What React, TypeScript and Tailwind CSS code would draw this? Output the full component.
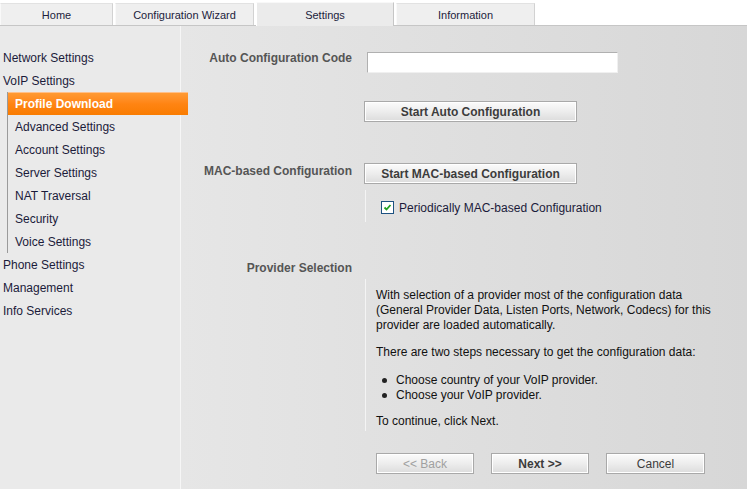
import React from 'react';

const tabs = [
  { label: 'Home', w: 'w-[113px]' },
  { label: 'Configuration Wizard', w: 'w-[139px]' },
  { label: 'Settings', w: 'w-[138px]', active: true },
  { label: 'Information', w: 'w-[139px]' },
];

const voipItems = [
  'Profile Download',
  'Advanced Settings',
  'Account Settings',
  'Server Settings',
  'NAT Traversal',
  'Security',
  'Voice Settings',
];

const Btn: React.FC<{ children: React.ReactNode; className?: string; disabled?: boolean }> = ({ children, className = '', disabled }) => (
  <button
    className={`h-[21px] border border-[#a9a9a9] bg-gradient-to-b from-[#fbfbfb] via-[#ededed] to-[#dcdcdc] text-[12px] shadow-[inset_0_0_0_1px_#ffffff] ${disabled ? 'text-[#a0a0a0]' : 'text-[#3c3c3c]'} ${className}`}
  >
    {children}
  </button>
);

export default function App() {
  return (
    <div className="w-[747px] h-[489px] overflow-hidden bg-white text-[12px] text-[#1b1b3a]" style={{ fontFamily: '"Liberation Sans", Arial, sans-serif' }}>
      {/* Tabs */}
      <div className="flex items-end h-[26px] bg-white border-b border-[#c6c6c6] gap-[2px]">
        {tabs.map((t) => (
          <div
            key={t.label}
            className={`${t.w} flex items-center justify-center pt-[2px] text-[11px] text-[#1c1c3c] border-t border-l border-r ${
              t.active
                ? 'h-[24px] -mb-px bg-[#ebebeb] border-t-[#f8f8f8] border-l-[#ffffff] border-r-[#c6c6c6]'
                : 'h-[22px] bg-[#efefef] border-t-[#e2e2e2] border-l-[#f9f9f9] border-r-[#d2d2d2]'
            }`}
          >
            {t.label}
          </div>
        ))}
      </div>

      <div className="flex h-[463px]">
        {/* Sidebar */}
        <div className="relative z-10 w-[181px] shrink-0 bg-[#eaeaea] border-r border-[#f6f6f6] pt-[20px]">
          <div className="h-[23px] flex items-center pl-[3px]">Network Settings</div>
          <div className="h-[23px] flex items-center pl-[3px]">VoIP Settings</div>
          <div className="ml-[7px] border-l border-[#9a9a9a]">
            {voipItems.map((it, i) =>
              i === 0 ? (
                <div
                  key={it}
                  className="w-[180px] h-[23px] flex items-center pl-[7px] bg-gradient-to-b from-[#ff9a33] via-[#ff8412] to-[#f97c00] border-t border-[#ffc08a] text-white font-bold"
                >
                  {it}
                </div>
              ) : (
                <div key={it} className="h-[23px] flex items-center pl-[7px]">
                  {it}
                </div>
              )
            )}
          </div>
          <div className="h-[23px] flex items-center pl-[3px]">Phone Settings</div>
          <div className="h-[23px] flex items-center pl-[3px]">Management</div>
          <div className="h-[23px] flex items-center pl-[3px]">Info Services</div>
        </div>

        {/* Main */}
        <div className="flex-1 bg-gradient-to-r from-[#e6e6e6] to-[#d7d7d7] pt-[26px]">
          {/* Auto configuration code */}
          <div className="flex items-start">
            <div className="w-[171px] text-right font-bold text-[#555555] leading-[14px] mt-[-1px]">Auto Configuration Code</div>
            <div className="ml-[15px] w-[251px] h-[21px] bg-white border border-[#b0b0b0] border-b-[#f0f0f0] border-r-[#f0f0f0]" />
          </div>
          <div className="flex mt-[28px]">
            <div className="w-[171px]" />
            <Btn className="ml-[12px] w-[213px] font-bold">Start Auto Configuration</Btn>
          </div>

          {/* MAC */}
          <div className="flex items-start mt-[41px]">
            <div className="w-[171px] text-right font-bold text-[#555555] leading-[14px] pt-[1px]">MAC-based Configuration</div>
            <Btn className="ml-[12px] w-[213px] font-bold">Start MAC-based Configuration</Btn>
          </div>
          <div className="flex">
            <div className="w-[171px]" />
            <div className="ml-[13px] mt-[6px] h-[32px] border-l border-[#f4f4f4] flex items-start pt-[11px] pl-[15px]">
              <span className="w-[13px] h-[13px] bg-white border border-[#1d5281] flex items-center justify-center shrink-0">
                <svg viewBox="0 0 11 11" className="w-[11px] h-[11px]">
                  <path d="M2.5 5.5 L4.5 7.5 L8.5 3" fill="none" stroke="#21a121" strokeWidth="1.8" />
                </svg>
              </span>
              <span className="ml-[5px] leading-[14px]">Periodically MAC-based Configuration</span>
            </div>
          </div>

          {/* Provider */}
          <div className="flex mt-[39px]">
            <div className="w-[171px] text-right font-bold text-[#555555] leading-[14px]">Provider Selection</div>
          </div>
          <div className="flex mt-[4px]">
            <div className="w-[171px]" />
            <div className="ml-[13px] h-[152px] border-l border-[#f4f4f4] pl-[10px] pt-[9px] text-[#111111] leading-[15px]">
              <p className="w-[340px]">
                With selection of a provider most of the configuration data (General Provider Data, Listen Ports, Network, Codecs) for this provider are loaded automatically.
              </p>
              <p className="mt-[12px]">There are two steps necessary to get the configuration data:</p>
              <ul className="mt-[13px] pl-[6px]">
                <li className="flex items-center"><span className="w-[5px] h-[5px] rounded-full bg-[#222] mr-[9px]" />Choose country of your VoIP provider.</li>
                <li className="flex items-center"><span className="w-[5px] h-[5px] rounded-full bg-[#222] mr-[9px]" />Choose your VoIP provider.</li>
              </ul>
              <p className="mt-[11px]">To continue, click Next.</p>
            </div>
          </div>

          <div className="flex mt-[22px]">
            <div className="w-[171px]" />
            <div className="ml-[24px] flex gap-[17px]">
              <Btn className="w-[98px]" disabled>{'<< Back'}</Btn>
              <Btn className="w-[98px] font-bold">{'Next >>'}</Btn>
              <Btn className="w-[99px]">Cancel</Btn>
            </div>
          </div>
        </div>
      </div>
    </div>
  );
}
